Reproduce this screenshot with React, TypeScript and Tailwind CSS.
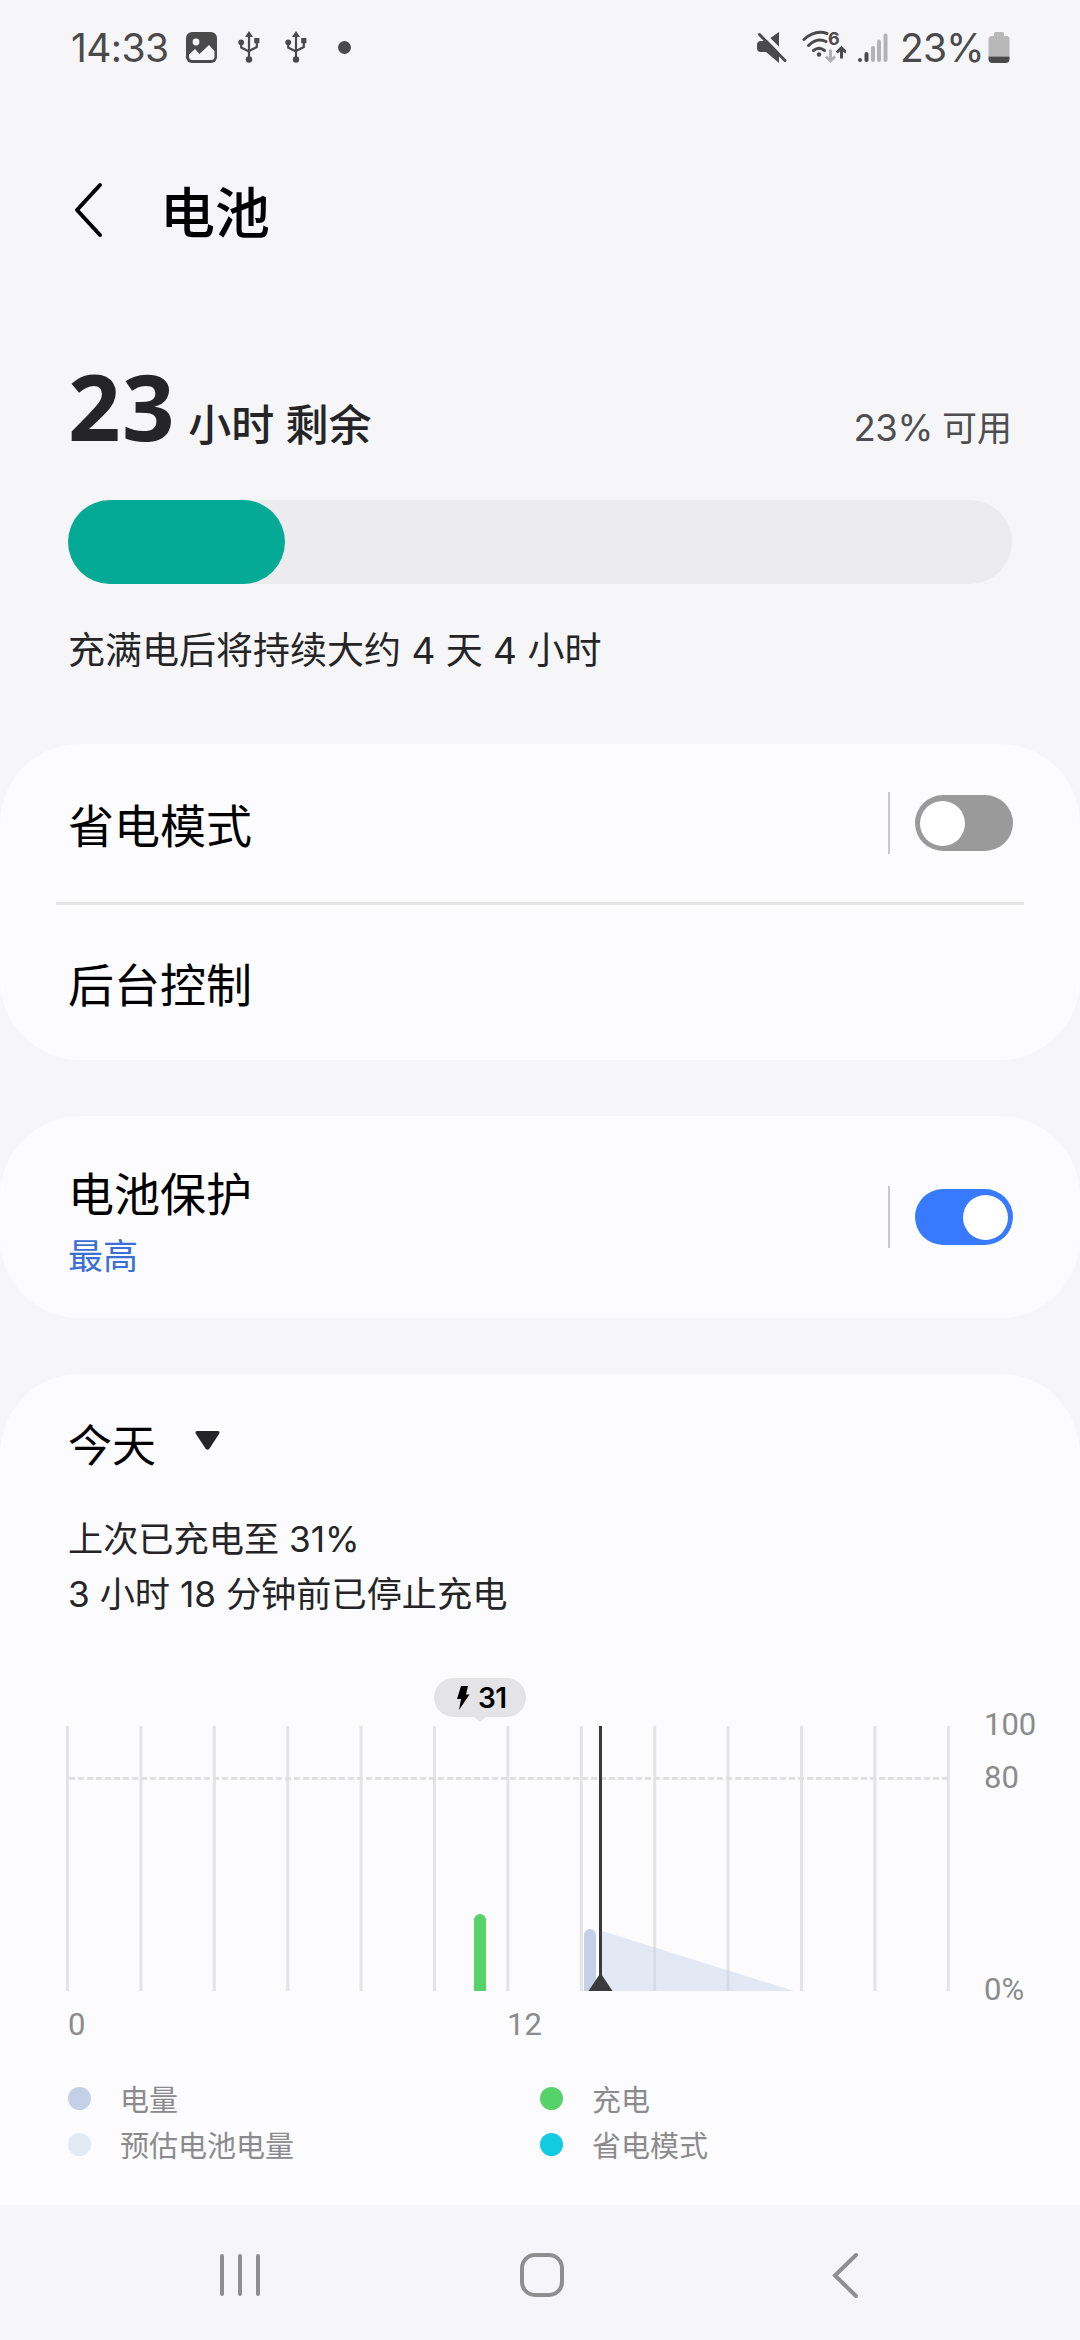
import type { ReactNode } from 'react';

const hours = [0, 2, 4, 6, 8, 10, 12, 14, 16, 18, 20, 22, 24];

const legend = [
  { label: '电量', dot: 'bg-[#c3d0e7]' },
  { label: '充电', dot: 'bg-[#55d269]' },
  { label: '预估电池电量', dot: 'bg-[#e3eaf4]' },
  { label: '省电模式', dot: 'bg-[#12cbe3]' },
];

function UsbIcon() {
  return (
    <svg width="22" height="32" viewBox="0 0 22 32" fill="none">
      <path d="M11 5v22M3.200 10v6.500l7.800 4M18.800 9v7l-7.800 4" stroke="#4a4a4b" strokeWidth="2.200" />
      <path d="M11 0l4 6H7z" fill="#4a4a4b" />
      <circle cx="3.200" cy="11.300" r="2.900" fill="#4a4a4b" />
      <path d="M16.200 7h5.200v5.200h-5.200z" fill="#4a4a4b" />
      <circle cx="11" cy="28.500" r="3.200" fill="#4a4a4b" />
    </svg>
  );
}

function StatusBar() {
  return (
    <div className="h-[94px] shrink-0 flex items-center justify-between pl-[71px] pr-[70px] text-[39px] leading-none text-[#4a4a4b]">
      <div className="flex items-center">
        <span className="w-[115px] tracking-[-0.6px]">14:33</span>
        <svg width="31" height="31" viewBox="0 0 31 31">
          <rect width="31" height="31" rx="6" fill="#4a4a4b" />
          <circle cx="10" cy="10" r="3.400" fill="#f6f6f8" />
          <path d="M3 22.500l6-5.500 4.500 5 9.500-9 5.500 6v5.500a3.500 3.500 0 0 1-3.500 3.500H6.500A3.500 3.500 0 0 1 3 24.500z" fill="#f6f6f8" />
        </svg>
        <div className="flex gap-[25px] ml-[21px]">
          <UsbIcon />
          <UsbIcon />
        </div>
        <span className="ml-[31px] size-[13px] rounded-full bg-[#4a4a4b]" />
      </div>
      <div className="flex items-center">
        <svg width="30" height="31" viewBox="0 0 30 31">
          <path d="M22 0v31L9 20H4a4 4 0 0 1-4-4v-3a4 4 0 0 1 4-4h5z" fill="#4a4a4b" />
          <path d="M3-1.500L31 26.500" stroke="#f6f6f8" strokeWidth="4" />
          <path d="M2.500 2.500L28 28.500" stroke="#4a4a4b" strokeWidth="3" strokeLinecap="round" />
        </svg>
        <svg className="ml-[15px]" width="44" height="46" viewBox="0 -6 44 46" fill="none">
          <g stroke="#4a4a4b" strokeWidth="3" strokeLinecap="round">
            <path d="M2 9.500Q13-.5 25 3.500" />
            <path d="M6.500 15.500Q15 7 24 11.500" />
            <path d="M11.500 20.500Q17 16 22.500 20.500" />
          </g>
          <circle cx="17" cy="24.500" r="2.200" fill="#4a4a4b" />
          <text x="26" y="14.500" className="text-[18px] font-bold" fill="#4a4a4b">6</text>
          <path d="M28.500 19.500v11M24 26.500l4.500 4.500 4.500-4.500" stroke="#b3b3b4" strokeWidth="3" />
          <path d="M39.500 28.500V19M34.800 22.500l4.700-4.700 4.700 4.700" stroke="#4a4a4b" strokeWidth="3" />
        </svg>
        <svg className="ml-[12px]" width="30" height="31" viewBox="0 0 30 31">
          <circle cx="2" cy="28" r="2" fill="#4a4a4b" />
          <rect x="6.500" y="20" width="4" height="10" rx="2" fill="#4a4a4b" />
          <rect x="13" y="14" width="4" height="16" rx="2" fill="#b3b3b4" />
          <rect x="19" y="7.500" width="4" height="22.500" rx="2" fill="#b3b3b4" />
          <rect x="25.500" y="1.500" width="4" height="28.500" rx="2" fill="#b3b3b4" />
        </svg>
        <span className="ml-[12px] w-[88px] tracking-[-0.8px]">23%</span>
        <svg width="22" height="31" viewBox="0 0 22 31">
          <path d="M6 4V1.500Q6 0 7.500 0h7Q16 0 16 1.500V4h2.500Q21.500 4 21.500 7.500v17H.5v-17Q.5 4 3.500 4z" fill="#b8b8b9" />
          <path d="M.5 24.500h21v2.500q0 4-4 4h-13q-4 0-4-4z" fill="#4a4a4b" />
        </svg>
      </div>
    </div>
  );
}

function Toggle({ on }: { on?: boolean }) {
  return (
    <div className="flex items-center">
      <div className="w-[2px] h-[62px] bg-[#c9c9cb]" />
      <div
        className={
          on
            ? 'ml-[25px] w-[98px] h-14 rounded-full flex items-center justify-end px-[5px] bg-[#387aff]'
            : 'ml-[25px] w-[98px] h-14 rounded-full flex items-center px-[5px] bg-[#9a9a9b]'
        }
      >
        <div className="size-[45px] rounded-full bg-white" />
      </div>
    </div>
  );
}

function Card({ className, children }: { className: string; children: ReactNode }) {
  return <section className={`shrink-0 bg-[#fcfcfe] ${className}`}>{children}</section>;
}

function Chart() {
  return (
    <svg width="1080" height="384" viewBox="0 1670 1080 384" className="block">
      {hours.map((h) => (
        <path key={h} d={`M${67.5 + h * 36.7} 1726v265`} stroke="#e4e4e6" strokeWidth="3" />
      ))}
      <path d="M69 1778.500h879" stroke="#e0e0e2" strokeWidth="3" strokeDasharray="6 3" />

      <path d="M602 1931L794 1991H602z" fill="#c3d3ea" fillOpacity=".45" />
      <path d="M584 1991v-56a6 6 0 0 1 12 0v56z" fill="#c3d0e7" />
      <path d="M474 1991v-71a6 6 0 0 1 12 0v71z" fill="#55d269" />
      <path d="M600.500 1726v255" stroke="#3a3a3c" strokeWidth="3" />
      <path d="M600.500 1973l12 18h-24z" fill="#3a3a3c" />

      <rect x="434" y="1678" width="92" height="39" rx="19.500" fill="#e4e4e6" />
      <path d="M473 1716h14l-7 6z" fill="#e4e4e6" />
      <path d="M461 1686h7l-2 8.500h3.500L459 1710l2-11h-4z" fill="#000" />
      <text x="478" y="1708" className="text-[28px] font-semibold tracking-[-0.5px]" fill="#000">31</text>

      <g className="font-['Roboto',sans-serif] text-[31px] font-normal" fill="#8b8b8d">
        <text x="984" y="1735">100</text>
        <text x="984" y="1788">80</text>
        <text x="984" y="2000">0%</text>
        <text x="68" y="2035">0</text>
        <text x="507" y="2035">12</text>
      </g>
    </svg>
  );
}

export default function App() {
  return (
    <div className="w-[1080px] h-[2340px] flex flex-col overflow-hidden bg-[#f6f6f8] font-['Inter','Noto_Sans_CJK_SC',sans-serif] font-[395] text-[#252527]">
      <StatusBar />

      <header className="h-[232px] shrink-0 flex items-center pl-[74px] text-black">
        <svg width="30" height="56" viewBox="0 0 30 56" fill="none">
          <path d="M26 3L3 28l23 25" stroke="#000" strokeWidth="4" strokeLinecap="round" strokeLinejoin="round" />
        </svg>
        <h1 className="ml-[56px] mt-[6px] text-[55px] leading-[60px] font-medium">电池</h1>
      </header>

      <section className="h-[418px] shrink-0 px-[68px] pt-[14px]">
        <div className="h-[160px] flex items-baseline justify-between font-['Noto_Sans','Noto_Sans_CJK_SC',sans-serif] leading-[132px]">
          <div className="flex items-baseline gap-[12px]">
            <span className="text-[92px] font-bold tracking-[1.5px]">23</span>
            <span className="text-[43px] font-medium">小时 剩余</span>
          </div>
          <span className="text-[35px] text-[#4e4e50]">
            <span className="font-['Inter',sans-serif] text-[36.5px] tracking-[-0.4px]">23%</span> 可用
          </span>
        </div>
        <div className="h-[84px] rounded-full bg-[#ececee]">
          <div className="w-[217px] h-full rounded-full bg-[#04aa95]" />
        </div>
        <p className="mt-[45px] text-[37px] leading-[44px]">充满电后将持续大约 4 天 4 小时</p>
      </section>

      <Card className="h-[316px] rounded-[80px]">
        <div className="h-[158px] flex items-center justify-between pl-[68px] pr-[67px] text-[46px] text-black">
          <span className="pt-[6px]">省电模式</span>
          <Toggle />
        </div>
        <div className="h-[3px] mx-14 bg-[#e5e5e7]" />
        <div className="h-[155px] flex items-center pt-[6px] pl-[68px] text-[46px] text-black">后台控制</div>
      </Card>

      <Card className="mt-14 h-[202px] rounded-[80px] flex items-center justify-between pl-[68px] pr-[67px]">
        <div className="pt-[11px]">
          <div className="text-[46px] leading-[66px] text-black">电池保护</div>
          <div className="text-[35px] leading-[58px] text-[#3c6fd4]">最高</div>
        </div>
        <Toggle on />
      </Card>

      <Card className="mt-14 h-[831px] rounded-t-[80px]">
        <div className="h-[296px] px-[68px] pt-[42px]">
          <div className="flex items-center text-[44px] leading-[60px] text-black">
            今天
            <svg className="ml-[39px] mb-[11px]" width="25" height="19" viewBox="0 0 25 19">
              <path d="M2 0h21q2.500.5 1 3L14.500 17.500q-2 2.500-4 0L1 3Q-.5.500 2 0z" fill="#252527" />
            </svg>
          </div>
          <div className="mt-[36px] text-[35.2px] leading-[55px]">
            <p>上次已充电至 31%</p>
            <p>3 小时 18 分钟前已停止充电</p>
          </div>
        </div>
        <Chart />
        <div className="mt-[24px] pl-[68px] grid grid-cols-[472px_1fr] text-[29px] leading-[46px] text-[#8b8b8d]">
          {legend.map((item) => (
            <div key={item.label} className="flex items-center">
              <span className={`mb-[6px] mr-[29px] size-[23px] rounded-full ${item.dot}`} />
              {item.label}
            </div>
          ))}
        </div>
      </Card>

      <nav className="h-[135px] shrink-0 pt-12 pl-[220px] flex items-start">
        <svg width="40" height="44" viewBox="0 0 40 44" stroke="#8f8f90" strokeWidth="4" strokeLinecap="round">
          <path d="M2 3v38M20 3v38M38 3v38" />
        </svg>
        <svg className="ml-[260px]" width="45" height="45" viewBox="0 0 45 45" fill="none">
          <rect x="2" y="2" width="40" height="40" rx="13" stroke="#8f8f90" strokeWidth="4" />
        </svg>
        <svg className="ml-[267px]" width="27" height="46" viewBox="0 0 27 46" fill="none">
          <path d="M24 2L3 22.500l21 20.500" stroke="#8f8f90" strokeWidth="4" strokeLinecap="round" />
        </svg>
      </nav>
    </div>
  );
}
